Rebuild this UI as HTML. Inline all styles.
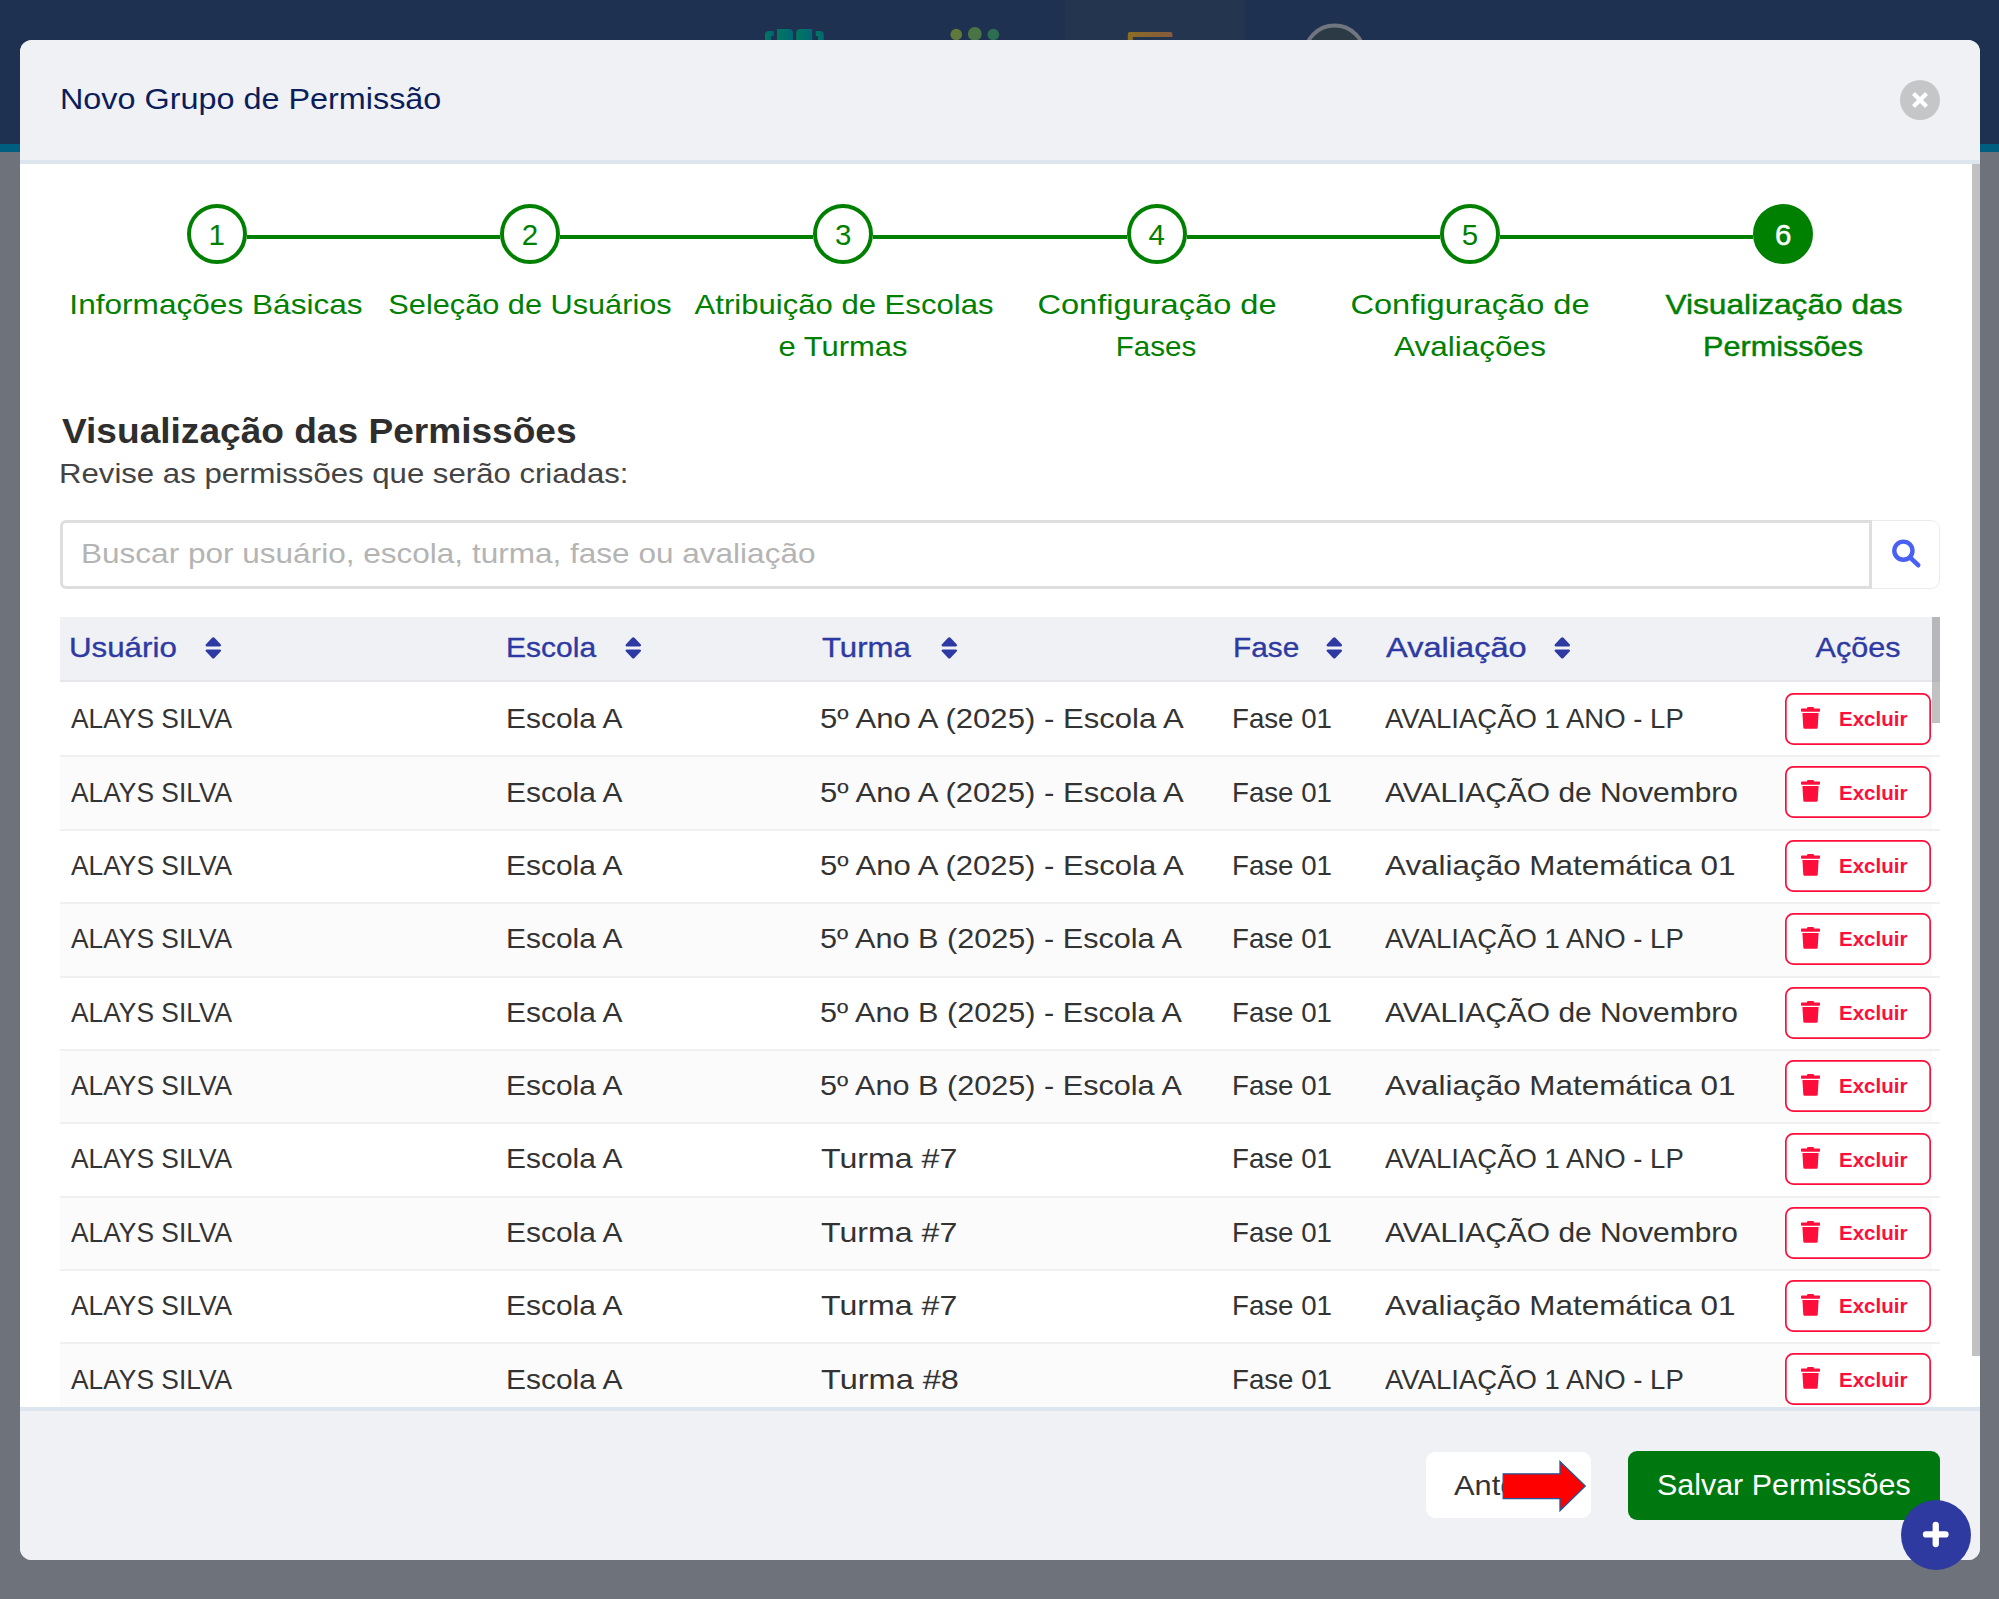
<!DOCTYPE html>
<html><head><meta charset="utf-8"><title>Novo Grupo de Permissão</title>
<style>
*{box-sizing:border-box;margin:0;padding:0}
html,body{width:1999px;height:1599px;overflow:hidden}
body{background:#6e727b;font-family:"Liberation Sans", sans-serif;position:relative}
.abs{position:absolute}
.t{position:absolute;white-space:nowrap;line-height:1;}
.t .c{display:inline-block;transform-origin:50% 0;}
#nav{position:absolute;left:0;top:0;width:1999px;height:144px;background:#1f3150}
#teal{position:absolute;left:0;top:144px;width:1999px;height:8px;background:#005f80}
#modal{position:absolute;left:20px;top:40px;width:1960px;height:1520px;border-radius:12px;overflow:hidden;background:#fff}
#mhead{position:absolute;left:20px;top:40px;width:1960px;height:120px;background:#f0f1f5;border-radius:12px 12px 0 0}
#mhb{position:absolute;left:20px;top:160px;width:1960px;height:4px;background:#dde6ef}
#mfoot{position:absolute;left:20px;top:1407px;width:1960px;height:153px;background:#f0f1f5;border-top:4px solid #dde6ef;border-radius:0 0 12px 12px}
#pscroll{position:absolute;left:1972px;top:164px;width:8px;height:1192px;background:#c1c1c1}
.step{position:absolute;top:204px;width:60px;height:60px;border-radius:50%;border:4px solid #008000;font-size:29.5px;line-height:54px;text-align:center}
.step span{display:inline-block}
.sline{position:absolute;top:235px;height:4px;background:#008000}
#search{position:absolute;left:60px;top:520px;width:1812px;height:69px;border:3px solid #dedede;border-radius:6px 0 0 6px;background:#fff}
#sbtn{position:absolute;left:1872px;top:520px;width:68px;height:69px;border:1px solid #ebebeb;border-left:none;border-radius:0 9px 9px 0;background:#fff}
#thead{position:absolute;left:60px;top:617px;width:1880px;height:63px;background:#f0f1f5}
#theadb{position:absolute;left:60px;top:680px;width:1880px;height:2px;background:#e6e7ea}
.row{position:absolute;left:60px;width:1872px;height:74px}
.rsep{position:absolute;left:60px;width:1880px;height:2px;background:#f0f0f0}
.exc{position:absolute;left:1785px}
.trash{position:absolute;left:1801px}
.sort{position:absolute;top:636.5px}
#tscroll1{position:absolute;left:1932px;top:617px;width:8px;height:65px;background:#b6b7ba}
#tscroll2{position:absolute;left:1932px;top:682px;width:8px;height:41px;background:#c1c1c1}
#btnant{position:absolute;left:1425.5px;top:1452px;width:165px;height:66px;background:#fff;border-radius:9px;overflow:hidden}
#btnsave{position:absolute;left:1628px;top:1451px;width:312px;height:69px;background:#007810;border-radius:9px}
#fab{position:absolute;left:1901px;top:1500px;width:70px;height:70px;border-radius:50%;background:#2e3a9f}
</style></head><body>
<div id="nav"></div>
<div class="abs" style="left:1065px;top:0;width:180px;height:40px;background:#243550"></div>
<div id="teal"></div>
<svg class="abs" style="left:755px;top:20px" width="80" height="25" viewBox="0 0 80 25">
 <defs><linearGradient id="g1" x1="0" x2="1" y1="0" y2="0"><stop offset="0" stop-color="#00785e"/><stop offset="1" stop-color="#006578"/></linearGradient></defs>
 <path d="M10 25 V15 a4 4 0 0 1 4 -4 H18.8 V16 H16 V25 Z" fill="url(#g1)"/>
 <path d="M22 25 V9 H34 a4 4 0 0 1 4 4 V25 Z" fill="url(#g1)"/>
 <path d="M41.2 25 V13 a4 4 0 0 1 4 -4 H57.2 V25 Z" fill="url(#g1)"/>
 <path d="M60.8 11 H64.8 a4 4 0 0 1 4 4 V25 H63 V16 H60.8 Z" fill="url(#g1)"/>
</svg>
<svg class="abs" style="left:940px;top:20px" width="70" height="22" viewBox="0 0 70 22">
 <circle cx="16.25" cy="14.5" r="5.8" fill="#5f7a3a"/>
 <circle cx="34.8" cy="13.9" r="6.9" fill="#4a7446"/>
 <circle cx="53.3" cy="14.5" r="5.8" fill="#2d6e52"/>
</svg>
<svg class="abs" style="left:1126px;top:30px" width="50" height="12" viewBox="0 0 50 12">
 <defs><linearGradient id="g2" x1="0" x2="1"><stop offset="0" stop-color="#8a6d25"/><stop offset="1" stop-color="#875a3e"/></linearGradient></defs>
 <path d="M1.8 12 v-8 a2 2 0 0 1 2 -2 h40.6 a2 2 0 0 1 2 2 v3.1 h-39.5 v4.9z" fill="url(#g2)"/>
</svg>
<svg class="abs" style="left:1300px;top:20px" width="70" height="22" viewBox="0 0 70 22">
 <circle cx="34.6" cy="35.6" r="30" fill="#2b3a44" stroke="#70757f" stroke-width="4"/>
</svg>
<div id="modal"></div>
<div id="mhead"></div>
<div id="mhb"></div>
<svg class="abs" style="left:1900px;top:80px" width="40" height="40" viewBox="0 0 40 40">
 <circle cx="20" cy="20" r="20" fill="#c5c6c8"/>
 <path d="M13.5 13.5 L26.5 26.5 M26.5 13.5 L13.5 26.5" stroke="#fff" stroke-width="4.2" stroke-linecap="butt"/>
</svg>
<div id="pscroll"></div>
<div class='sline' style='left:246.67px;width:253.33px;'></div><div class='sline' style='left:560.00px;width:253.33px;'></div><div class='sline' style='left:873.33px;width:253.33px;'></div><div class='sline' style='left:1186.67px;width:253.33px;'></div><div class='sline' style='left:1500.00px;width:253.33px;'></div>
<div class='step' style='left:186.67px;background:#fff;color:#008000;'><span>1</span></div><div class='step' style='left:500.00px;background:#fff;color:#008000;'><span>2</span></div><div class='step' style='left:813.33px;background:#fff;color:#008000;'><span>3</span></div><div class='step' style='left:1126.67px;background:#fff;color:#008000;'><span>4</span></div><div class='step' style='left:1440.00px;background:#fff;color:#008000;'><span>5</span></div><div class='step' style='left:1753.33px;background:#008000;color:#fff;-webkit-text-stroke:0.5px #fff;'><span>6</span></div>
<div id="search"></div>
<div id="sbtn"></div>
<svg class="abs" style="left:1885px;top:535px" width="40" height="40" viewBox="0 0 40 40">
 <circle cx="18.4" cy="15.7" r="9.1" fill="none" stroke="#4a60f5" stroke-width="4.4"/>
 <path d="M25.5 22.8 L33.2 30.2" stroke="#4a60f5" stroke-width="4.6" stroke-linecap="round"/>
</svg>
<div id="thead"></div>
<div id="theadb"></div>
<div class='row' style='top:682.00px;background:#ffffff;'></div><svg class='exc' style='top:693.00px;' width='146' height='52' viewBox='0 0 146 52'><rect x='0.85' y='0.85' width='144.3' height='50.3' rx='7.5' fill='#fff' stroke='#ff0d3b' stroke-width='1.7'/></svg><svg class='trash' style='top:707.00px' width='19' height='22' viewBox='0 0 19 22'><rect x='6' y='0.1' width='7' height='2.4' rx='1.1' fill='#ff0d3b'/><rect x='0' y='1.6' width='19' height='3.2' rx='0.7' fill='#ff0d3b'/><path d='M1.4 6 H17.6 L16.7 20.5 a1.3 1.3 0 0 1 -1.3 1.2 H3.6 a1.3 1.3 0 0 1 -1.3 -1.2 Z' fill='#ff0d3b'/></svg><div class='row' style='top:755.38px;background:#fbfbfc;'></div><div class='rsep' style='top:755.38px;'></div><svg class='exc' style='top:766.38px;' width='146' height='52' viewBox='0 0 146 52'><rect x='0.85' y='0.85' width='144.3' height='50.3' rx='7.5' fill='#fff' stroke='#ff0d3b' stroke-width='1.7'/></svg><svg class='trash' style='top:780.38px' width='19' height='22' viewBox='0 0 19 22'><rect x='6' y='0.1' width='7' height='2.4' rx='1.1' fill='#ff0d3b'/><rect x='0' y='1.6' width='19' height='3.2' rx='0.7' fill='#ff0d3b'/><path d='M1.4 6 H17.6 L16.7 20.5 a1.3 1.3 0 0 1 -1.3 1.2 H3.6 a1.3 1.3 0 0 1 -1.3 -1.2 Z' fill='#ff0d3b'/></svg><div class='row' style='top:828.76px;background:#ffffff;'></div><div class='rsep' style='top:828.76px;'></div><svg class='exc' style='top:839.76px;' width='146' height='52' viewBox='0 0 146 52'><rect x='0.85' y='0.85' width='144.3' height='50.3' rx='7.5' fill='#fff' stroke='#ff0d3b' stroke-width='1.7'/></svg><svg class='trash' style='top:853.76px' width='19' height='22' viewBox='0 0 19 22'><rect x='6' y='0.1' width='7' height='2.4' rx='1.1' fill='#ff0d3b'/><rect x='0' y='1.6' width='19' height='3.2' rx='0.7' fill='#ff0d3b'/><path d='M1.4 6 H17.6 L16.7 20.5 a1.3 1.3 0 0 1 -1.3 1.2 H3.6 a1.3 1.3 0 0 1 -1.3 -1.2 Z' fill='#ff0d3b'/></svg><div class='row' style='top:902.14px;background:#fbfbfc;'></div><div class='rsep' style='top:902.14px;'></div><svg class='exc' style='top:913.14px;' width='146' height='52' viewBox='0 0 146 52'><rect x='0.85' y='0.85' width='144.3' height='50.3' rx='7.5' fill='#fff' stroke='#ff0d3b' stroke-width='1.7'/></svg><svg class='trash' style='top:927.14px' width='19' height='22' viewBox='0 0 19 22'><rect x='6' y='0.1' width='7' height='2.4' rx='1.1' fill='#ff0d3b'/><rect x='0' y='1.6' width='19' height='3.2' rx='0.7' fill='#ff0d3b'/><path d='M1.4 6 H17.6 L16.7 20.5 a1.3 1.3 0 0 1 -1.3 1.2 H3.6 a1.3 1.3 0 0 1 -1.3 -1.2 Z' fill='#ff0d3b'/></svg><div class='row' style='top:975.52px;background:#ffffff;'></div><div class='rsep' style='top:975.52px;'></div><svg class='exc' style='top:986.52px;' width='146' height='52' viewBox='0 0 146 52'><rect x='0.85' y='0.85' width='144.3' height='50.3' rx='7.5' fill='#fff' stroke='#ff0d3b' stroke-width='1.7'/></svg><svg class='trash' style='top:1000.52px' width='19' height='22' viewBox='0 0 19 22'><rect x='6' y='0.1' width='7' height='2.4' rx='1.1' fill='#ff0d3b'/><rect x='0' y='1.6' width='19' height='3.2' rx='0.7' fill='#ff0d3b'/><path d='M1.4 6 H17.6 L16.7 20.5 a1.3 1.3 0 0 1 -1.3 1.2 H3.6 a1.3 1.3 0 0 1 -1.3 -1.2 Z' fill='#ff0d3b'/></svg><div class='row' style='top:1048.90px;background:#fbfbfc;'></div><div class='rsep' style='top:1048.90px;'></div><svg class='exc' style='top:1059.90px;' width='146' height='52' viewBox='0 0 146 52'><rect x='0.85' y='0.85' width='144.3' height='50.3' rx='7.5' fill='#fff' stroke='#ff0d3b' stroke-width='1.7'/></svg><svg class='trash' style='top:1073.90px' width='19' height='22' viewBox='0 0 19 22'><rect x='6' y='0.1' width='7' height='2.4' rx='1.1' fill='#ff0d3b'/><rect x='0' y='1.6' width='19' height='3.2' rx='0.7' fill='#ff0d3b'/><path d='M1.4 6 H17.6 L16.7 20.5 a1.3 1.3 0 0 1 -1.3 1.2 H3.6 a1.3 1.3 0 0 1 -1.3 -1.2 Z' fill='#ff0d3b'/></svg><div class='row' style='top:1122.28px;background:#ffffff;'></div><div class='rsep' style='top:1122.28px;'></div><svg class='exc' style='top:1133.28px;' width='146' height='52' viewBox='0 0 146 52'><rect x='0.85' y='0.85' width='144.3' height='50.3' rx='7.5' fill='#fff' stroke='#ff0d3b' stroke-width='1.7'/></svg><svg class='trash' style='top:1147.28px' width='19' height='22' viewBox='0 0 19 22'><rect x='6' y='0.1' width='7' height='2.4' rx='1.1' fill='#ff0d3b'/><rect x='0' y='1.6' width='19' height='3.2' rx='0.7' fill='#ff0d3b'/><path d='M1.4 6 H17.6 L16.7 20.5 a1.3 1.3 0 0 1 -1.3 1.2 H3.6 a1.3 1.3 0 0 1 -1.3 -1.2 Z' fill='#ff0d3b'/></svg><div class='row' style='top:1195.66px;background:#fbfbfc;'></div><div class='rsep' style='top:1195.66px;'></div><svg class='exc' style='top:1206.66px;' width='146' height='52' viewBox='0 0 146 52'><rect x='0.85' y='0.85' width='144.3' height='50.3' rx='7.5' fill='#fff' stroke='#ff0d3b' stroke-width='1.7'/></svg><svg class='trash' style='top:1220.66px' width='19' height='22' viewBox='0 0 19 22'><rect x='6' y='0.1' width='7' height='2.4' rx='1.1' fill='#ff0d3b'/><rect x='0' y='1.6' width='19' height='3.2' rx='0.7' fill='#ff0d3b'/><path d='M1.4 6 H17.6 L16.7 20.5 a1.3 1.3 0 0 1 -1.3 1.2 H3.6 a1.3 1.3 0 0 1 -1.3 -1.2 Z' fill='#ff0d3b'/></svg><div class='row' style='top:1269.04px;background:#ffffff;'></div><div class='rsep' style='top:1269.04px;'></div><svg class='exc' style='top:1280.04px;' width='146' height='52' viewBox='0 0 146 52'><rect x='0.85' y='0.85' width='144.3' height='50.3' rx='7.5' fill='#fff' stroke='#ff0d3b' stroke-width='1.7'/></svg><svg class='trash' style='top:1294.04px' width='19' height='22' viewBox='0 0 19 22'><rect x='6' y='0.1' width='7' height='2.4' rx='1.1' fill='#ff0d3b'/><rect x='0' y='1.6' width='19' height='3.2' rx='0.7' fill='#ff0d3b'/><path d='M1.4 6 H17.6 L16.7 20.5 a1.3 1.3 0 0 1 -1.3 1.2 H3.6 a1.3 1.3 0 0 1 -1.3 -1.2 Z' fill='#ff0d3b'/></svg><div class='row' style='top:1342.42px;background:#fbfbfc;'></div><div class='rsep' style='top:1342.42px;'></div><svg class='exc' style='top:1353.42px;' width='146' height='52' viewBox='0 0 146 52'><rect x='0.85' y='0.85' width='144.3' height='50.3' rx='7.5' fill='#fff' stroke='#ff0d3b' stroke-width='1.7'/></svg><svg class='trash' style='top:1367.42px' width='19' height='22' viewBox='0 0 19 22'><rect x='6' y='0.1' width='7' height='2.4' rx='1.1' fill='#ff0d3b'/><rect x='0' y='1.6' width='19' height='3.2' rx='0.7' fill='#ff0d3b'/><path d='M1.4 6 H17.6 L16.7 20.5 a1.3 1.3 0 0 1 -1.3 1.2 H3.6 a1.3 1.3 0 0 1 -1.3 -1.2 Z' fill='#ff0d3b'/></svg>
<svg class='sort' style='left:204.8px' width='17' height='22' viewBox='0 0 17 22'><path d='M7.1 0.8 a1.7 1.7 0 0 1 2.4 0 l6.1 6.5 a1.2 1.2 0 0 1 -0.85 2.1 h-12.9 a1.2 1.2 0 0 1 -0.85 -2.1 z M1.85 12.4 h12.9 a1.2 1.2 0 0 1 0.85 2.1 l-6.1 6.5 a1.7 1.7 0 0 1 -2.4 0 l-6.1 -6.5 a1.2 1.2 0 0 1 0.85 -2.1 z' fill='#2e3aa3'/></svg><svg class='sort' style='left:625.0px' width='17' height='22' viewBox='0 0 17 22'><path d='M7.1 0.8 a1.7 1.7 0 0 1 2.4 0 l6.1 6.5 a1.2 1.2 0 0 1 -0.85 2.1 h-12.9 a1.2 1.2 0 0 1 -0.85 -2.1 z M1.85 12.4 h12.9 a1.2 1.2 0 0 1 0.85 2.1 l-6.1 6.5 a1.7 1.7 0 0 1 -2.4 0 l-6.1 -6.5 a1.2 1.2 0 0 1 0.85 -2.1 z' fill='#2e3aa3'/></svg><svg class='sort' style='left:940.6px' width='17' height='22' viewBox='0 0 17 22'><path d='M7.1 0.8 a1.7 1.7 0 0 1 2.4 0 l6.1 6.5 a1.2 1.2 0 0 1 -0.85 2.1 h-12.9 a1.2 1.2 0 0 1 -0.85 -2.1 z M1.85 12.4 h12.9 a1.2 1.2 0 0 1 0.85 2.1 l-6.1 6.5 a1.7 1.7 0 0 1 -2.4 0 l-6.1 -6.5 a1.2 1.2 0 0 1 0.85 -2.1 z' fill='#2e3aa3'/></svg><svg class='sort' style='left:1325.6px' width='17' height='22' viewBox='0 0 17 22'><path d='M7.1 0.8 a1.7 1.7 0 0 1 2.4 0 l6.1 6.5 a1.2 1.2 0 0 1 -0.85 2.1 h-12.9 a1.2 1.2 0 0 1 -0.85 -2.1 z M1.85 12.4 h12.9 a1.2 1.2 0 0 1 0.85 2.1 l-6.1 6.5 a1.7 1.7 0 0 1 -2.4 0 l-6.1 -6.5 a1.2 1.2 0 0 1 0.85 -2.1 z' fill='#2e3aa3'/></svg><svg class='sort' style='left:1553.5px' width='17' height='22' viewBox='0 0 17 22'><path d='M7.1 0.8 a1.7 1.7 0 0 1 2.4 0 l6.1 6.5 a1.2 1.2 0 0 1 -0.85 2.1 h-12.9 a1.2 1.2 0 0 1 -0.85 -2.1 z M1.85 12.4 h12.9 a1.2 1.2 0 0 1 0.85 2.1 l-6.1 6.5 a1.7 1.7 0 0 1 -2.4 0 l-6.1 -6.5 a1.2 1.2 0 0 1 0.85 -2.1 z' fill='#2e3aa3'/></svg>
<div id="tscroll1"></div>
<div id="tscroll2"></div>
<div id="mfoot"></div>
<div id="btnant"></div>
<div id="btnsave"></div>
<div class='t' id='t0' style='left:60.04px;top:84.5px;transform:scaleX(1.1159);transform-origin:0 0;font-size:29px;font-weight:400;color:#0b1d5a;'><span class='c'>Novo Grupo de Permissão</span></div>
<div class='t' id='t1' style='left:215.67px;top:290.9px;width:0;font-size:28px;font-weight:400;color:#008000;'><span class='c' style='transform:translateX(-50%) scaleX(1.1284);'>Informações Básicas</span></div>
<div class='t' id='t2' style='left:529.50px;top:290.9px;width:0;font-size:28px;font-weight:400;color:#008000;'><span class='c' style='transform:translateX(-50%) scaleX(1.0965);'>Seleção de Usuários</span></div>
<div class='t' id='t3' style='left:843.83px;top:290.9px;width:0;font-size:28px;font-weight:400;color:#008000;'><span class='c' style='transform:translateX(-50%) scaleX(1.1104);'>Atribuição de Escolas</span></div>
<div class='t' id='t4' style='left:843.33px;top:332.9px;width:0;font-size:28px;font-weight:400;color:#008000;'><span class='c' style='transform:translateX(-50%) scaleX(1.1063);'>e Turmas</span></div>
<div class='t' id='t5' style='left:1157.16px;top:290.9px;width:0;font-size:28px;font-weight:400;color:#008000;'><span class='c' style='transform:translateX(-50%) scaleX(1.1637);'>Configuração de</span></div>
<div class='t' id='t6' style='left:1156.16px;top:332.9px;width:0;font-size:28px;font-weight:400;color:#008000;'><span class='c' style='transform:translateX(-50%) scaleX(1.0542);'>Fases</span></div>
<div class='t' id='t7' style='left:1470.49px;top:290.9px;width:0;font-size:28px;font-weight:400;color:#008000;'><span class='c' style='transform:translateX(-50%) scaleX(1.1637);'>Configuração de</span></div>
<div class='t' id='t8' style='left:1470.49px;top:332.9px;width:0;font-size:28px;font-weight:400;color:#008000;'><span class='c' style='transform:translateX(-50%) scaleX(1.1252);'>Avaliações</span></div>
<div class='t' id='t9' style='left:1783.82px;top:290.9px;width:0;font-size:28px;font-weight:400;color:#008000;-webkit-text-stroke:0.45px #008000;'><span class='c' style='transform:translateX(-50%) scaleX(1.1314);'>Visualização das</span></div>
<div class='t' id='t10' style='left:1782.82px;top:332.9px;width:0;font-size:28px;font-weight:400;color:#008000;-webkit-text-stroke:0.45px #008000;'><span class='c' style='transform:translateX(-50%) scaleX(1.0931);'>Permissões</span></div>
<div class='t' id='t11' style='left:61.53px;top:413.2px;transform:scaleX(1.0594);transform-origin:0 0;font-size:35px;font-weight:700;color:#2e2e2e;'><span class='c'>Visualização das Permissões</span></div>
<div class='t' id='t12' style='left:58.78px;top:459.7px;transform:scaleX(1.1122);transform-origin:0 0;font-size:28px;font-weight:400;color:#444;'><span class='c'>Revise as permissões que serão criadas:</span></div>
<div class='t' id='t13' style='left:81.17px;top:540.3px;transform:scaleX(1.1263);transform-origin:0 0;font-size:28px;font-weight:400;color:#b4b4b4;'><span class='c'>Buscar por usuário, escola, turma, fase ou avaliação</span></div>
<div class='t' id='t14' style='left:68.77px;top:633.9px;transform:scaleX(1.1170);transform-origin:0 0;font-size:28px;font-weight:400;color:#2e3aa3;-webkit-text-stroke:0.35px #2e3aa3;'><span class='c'>Usuário</span></div>
<div class='t' id='t15' style='left:506.38px;top:633.9px;transform:scaleX(1.0724);transform-origin:0 0;font-size:28px;font-weight:400;color:#2e3aa3;-webkit-text-stroke:0.35px #2e3aa3;'><span class='c'>Escola</span></div>
<div class='t' id='t16' style='left:822.00px;top:633.9px;transform:scaleX(1.1111);transform-origin:0 0;font-size:28px;font-weight:400;color:#2e3aa3;-webkit-text-stroke:0.35px #2e3aa3;'><span class='c'>Turma</span></div>
<div class='t' id='t17' style='left:1232.82px;top:633.9px;transform:scaleX(1.0635);transform-origin:0 0;font-size:28px;font-weight:400;color:#2e3aa3;-webkit-text-stroke:0.35px #2e3aa3;'><span class='c'>Fase</span></div>
<div class='t' id='t18' style='left:1386.00px;top:633.9px;transform:scaleX(1.1634);transform-origin:0 0;font-size:28px;font-weight:400;color:#2e3aa3;-webkit-text-stroke:0.35px #2e3aa3;'><span class='c'>Avaliação</span></div>
<div class='t' id='t19' style='left:1857.50px;top:633.9px;width:0;font-size:28px;font-weight:400;color:#2e3aa3;-webkit-text-stroke:0.35px #2e3aa3;'><span class='c' style='transform:translateX(-50%) scaleX(1.0897);'>Ações</span></div>
<div class='t' id='t20' style='left:71.00px;top:705.1px;transform:scaleX(0.9415);transform-origin:0 0;font-size:28px;font-weight:400;color:#333333;'><span class='c'>ALAYS SILVA</span></div>
<div class='t' id='t21' style='left:506.15px;top:705.1px;transform:scaleX(1.0692);transform-origin:0 0;font-size:28px;font-weight:400;color:#333333;'><span class='c'>Escola A</span></div>
<div class='t' id='t22' style='left:820.44px;top:705.1px;transform:scaleX(1.1101);transform-origin:0 0;font-size:28px;font-weight:400;color:#333333;'><span class='c'>5º Ano A (2025) - Escola A</span></div>
<div class='t' id='t23' style='left:1385.19px;top:705.1px;transform:scaleX(0.9829);transform-origin:0 0;font-size:28px;font-weight:400;color:#333333;'><span class='c'>AVALIAÇÃO 1 ANO - LP</span></div>
<div class='t' id='t24' style='left:1232.43px;top:705.1px;transform:scaleX(0.9880);transform-origin:0 0;font-size:28px;font-weight:400;color:#333333;'><span class='c'>Fase 01</span></div>
<div class='t' id='t25' style='left:1839.32px;top:708.2px;transform:scaleX(0.9769);transform-origin:0 0;font-size:21px;font-weight:700;color:#ff0d3b;'><span class='c'>Excluir</span></div>
<div class='t' id='t26' style='left:71.00px;top:778.5px;transform:scaleX(0.9415);transform-origin:0 0;font-size:28px;font-weight:400;color:#333333;'><span class='c'>ALAYS SILVA</span></div>
<div class='t' id='t27' style='left:506.15px;top:778.5px;transform:scaleX(1.0692);transform-origin:0 0;font-size:28px;font-weight:400;color:#333333;'><span class='c'>Escola A</span></div>
<div class='t' id='t28' style='left:820.44px;top:778.5px;transform:scaleX(1.1101);transform-origin:0 0;font-size:28px;font-weight:400;color:#333333;'><span class='c'>5º Ano A (2025) - Escola A</span></div>
<div class='t' id='t29' style='left:1385.24px;top:778.5px;transform:scaleX(1.0679);transform-origin:0 0;font-size:28px;font-weight:400;color:#333333;'><span class='c'>AVALIAÇÃO de Novembro</span></div>
<div class='t' id='t30' style='left:1232.43px;top:778.5px;transform:scaleX(0.9880);transform-origin:0 0;font-size:28px;font-weight:400;color:#333333;'><span class='c'>Fase 01</span></div>
<div class='t' id='t31' style='left:1839.32px;top:781.6px;transform:scaleX(0.9769);transform-origin:0 0;font-size:21px;font-weight:700;color:#ff0d3b;'><span class='c'>Excluir</span></div>
<div class='t' id='t32' style='left:71.00px;top:851.9px;transform:scaleX(0.9415);transform-origin:0 0;font-size:28px;font-weight:400;color:#333333;'><span class='c'>ALAYS SILVA</span></div>
<div class='t' id='t33' style='left:506.15px;top:851.9px;transform:scaleX(1.0692);transform-origin:0 0;font-size:28px;font-weight:400;color:#333333;'><span class='c'>Escola A</span></div>
<div class='t' id='t34' style='left:820.44px;top:851.9px;transform:scaleX(1.1101);transform-origin:0 0;font-size:28px;font-weight:400;color:#333333;'><span class='c'>5º Ano A (2025) - Escola A</span></div>
<div class='t' id='t35' style='left:1385.27px;top:851.9px;transform:scaleX(1.1218);transform-origin:0 0;font-size:28px;font-weight:400;color:#333333;'><span class='c'>Avaliação Matemática 01</span></div>
<div class='t' id='t36' style='left:1232.43px;top:851.9px;transform:scaleX(0.9880);transform-origin:0 0;font-size:28px;font-weight:400;color:#333333;'><span class='c'>Fase 01</span></div>
<div class='t' id='t37' style='left:1839.32px;top:855.0px;transform:scaleX(0.9769);transform-origin:0 0;font-size:21px;font-weight:700;color:#ff0d3b;'><span class='c'>Excluir</span></div>
<div class='t' id='t38' style='left:71.00px;top:925.2px;transform:scaleX(0.9415);transform-origin:0 0;font-size:28px;font-weight:400;color:#333333;'><span class='c'>ALAYS SILVA</span></div>
<div class='t' id='t39' style='left:506.15px;top:925.2px;transform:scaleX(1.0692);transform-origin:0 0;font-size:28px;font-weight:400;color:#333333;'><span class='c'>Escola A</span></div>
<div class='t' id='t40' style='left:820.45px;top:925.2px;transform:scaleX(1.0937);transform-origin:0 0;font-size:28px;font-weight:400;color:#333333;'><span class='c'>5º Ano B (2025) - Escola A</span></div>
<div class='t' id='t41' style='left:1385.19px;top:925.2px;transform:scaleX(0.9829);transform-origin:0 0;font-size:28px;font-weight:400;color:#333333;'><span class='c'>AVALIAÇÃO 1 ANO - LP</span></div>
<div class='t' id='t42' style='left:1232.43px;top:925.2px;transform:scaleX(0.9880);transform-origin:0 0;font-size:28px;font-weight:400;color:#333333;'><span class='c'>Fase 01</span></div>
<div class='t' id='t43' style='left:1839.32px;top:928.4px;transform:scaleX(0.9769);transform-origin:0 0;font-size:21px;font-weight:700;color:#ff0d3b;'><span class='c'>Excluir</span></div>
<div class='t' id='t44' style='left:71.00px;top:998.6px;transform:scaleX(0.9415);transform-origin:0 0;font-size:28px;font-weight:400;color:#333333;'><span class='c'>ALAYS SILVA</span></div>
<div class='t' id='t45' style='left:506.15px;top:998.6px;transform:scaleX(1.0692);transform-origin:0 0;font-size:28px;font-weight:400;color:#333333;'><span class='c'>Escola A</span></div>
<div class='t' id='t46' style='left:820.45px;top:998.6px;transform:scaleX(1.0937);transform-origin:0 0;font-size:28px;font-weight:400;color:#333333;'><span class='c'>5º Ano B (2025) - Escola A</span></div>
<div class='t' id='t47' style='left:1385.24px;top:998.6px;transform:scaleX(1.0679);transform-origin:0 0;font-size:28px;font-weight:400;color:#333333;'><span class='c'>AVALIAÇÃO de Novembro</span></div>
<div class='t' id='t48' style='left:1232.43px;top:998.6px;transform:scaleX(0.9880);transform-origin:0 0;font-size:28px;font-weight:400;color:#333333;'><span class='c'>Fase 01</span></div>
<div class='t' id='t49' style='left:1839.32px;top:1001.7px;transform:scaleX(0.9769);transform-origin:0 0;font-size:21px;font-weight:700;color:#ff0d3b;'><span class='c'>Excluir</span></div>
<div class='t' id='t50' style='left:71.00px;top:1072.0px;transform:scaleX(0.9415);transform-origin:0 0;font-size:28px;font-weight:400;color:#333333;'><span class='c'>ALAYS SILVA</span></div>
<div class='t' id='t51' style='left:506.15px;top:1072.0px;transform:scaleX(1.0692);transform-origin:0 0;font-size:28px;font-weight:400;color:#333333;'><span class='c'>Escola A</span></div>
<div class='t' id='t52' style='left:820.45px;top:1072.0px;transform:scaleX(1.0937);transform-origin:0 0;font-size:28px;font-weight:400;color:#333333;'><span class='c'>5º Ano B (2025) - Escola A</span></div>
<div class='t' id='t53' style='left:1385.27px;top:1072.0px;transform:scaleX(1.1218);transform-origin:0 0;font-size:28px;font-weight:400;color:#333333;'><span class='c'>Avaliação Matemática 01</span></div>
<div class='t' id='t54' style='left:1232.43px;top:1072.0px;transform:scaleX(0.9880);transform-origin:0 0;font-size:28px;font-weight:400;color:#333333;'><span class='c'>Fase 01</span></div>
<div class='t' id='t55' style='left:1839.32px;top:1075.1px;transform:scaleX(0.9769);transform-origin:0 0;font-size:21px;font-weight:700;color:#ff0d3b;'><span class='c'>Excluir</span></div>
<div class='t' id='t56' style='left:71.00px;top:1145.4px;transform:scaleX(0.9415);transform-origin:0 0;font-size:28px;font-weight:400;color:#333333;'><span class='c'>ALAYS SILVA</span></div>
<div class='t' id='t57' style='left:506.15px;top:1145.4px;transform:scaleX(1.0692);transform-origin:0 0;font-size:28px;font-weight:400;color:#333333;'><span class='c'>Escola A</span></div>
<div class='t' id='t58' style='left:821.42px;top:1145.4px;transform:scaleX(1.1472);transform-origin:0 0;font-size:28px;font-weight:400;color:#333333;'><span class='c'>Turma #7</span></div>
<div class='t' id='t59' style='left:1385.19px;top:1145.4px;transform:scaleX(0.9829);transform-origin:0 0;font-size:28px;font-weight:400;color:#333333;'><span class='c'>AVALIAÇÃO 1 ANO - LP</span></div>
<div class='t' id='t60' style='left:1232.43px;top:1145.4px;transform:scaleX(0.9880);transform-origin:0 0;font-size:28px;font-weight:400;color:#333333;'><span class='c'>Fase 01</span></div>
<div class='t' id='t61' style='left:1839.32px;top:1148.5px;transform:scaleX(0.9769);transform-origin:0 0;font-size:21px;font-weight:700;color:#ff0d3b;'><span class='c'>Excluir</span></div>
<div class='t' id='t62' style='left:71.00px;top:1218.8px;transform:scaleX(0.9415);transform-origin:0 0;font-size:28px;font-weight:400;color:#333333;'><span class='c'>ALAYS SILVA</span></div>
<div class='t' id='t63' style='left:506.15px;top:1218.8px;transform:scaleX(1.0692);transform-origin:0 0;font-size:28px;font-weight:400;color:#333333;'><span class='c'>Escola A</span></div>
<div class='t' id='t64' style='left:821.42px;top:1218.8px;transform:scaleX(1.1472);transform-origin:0 0;font-size:28px;font-weight:400;color:#333333;'><span class='c'>Turma #7</span></div>
<div class='t' id='t65' style='left:1385.24px;top:1218.8px;transform:scaleX(1.0679);transform-origin:0 0;font-size:28px;font-weight:400;color:#333333;'><span class='c'>AVALIAÇÃO de Novembro</span></div>
<div class='t' id='t66' style='left:1232.43px;top:1218.8px;transform:scaleX(0.9880);transform-origin:0 0;font-size:28px;font-weight:400;color:#333333;'><span class='c'>Fase 01</span></div>
<div class='t' id='t67' style='left:1839.32px;top:1221.9px;transform:scaleX(0.9769);transform-origin:0 0;font-size:21px;font-weight:700;color:#ff0d3b;'><span class='c'>Excluir</span></div>
<div class='t' id='t68' style='left:71.00px;top:1292.1px;transform:scaleX(0.9415);transform-origin:0 0;font-size:28px;font-weight:400;color:#333333;'><span class='c'>ALAYS SILVA</span></div>
<div class='t' id='t69' style='left:506.15px;top:1292.1px;transform:scaleX(1.0692);transform-origin:0 0;font-size:28px;font-weight:400;color:#333333;'><span class='c'>Escola A</span></div>
<div class='t' id='t70' style='left:821.42px;top:1292.1px;transform:scaleX(1.1472);transform-origin:0 0;font-size:28px;font-weight:400;color:#333333;'><span class='c'>Turma #7</span></div>
<div class='t' id='t71' style='left:1385.27px;top:1292.1px;transform:scaleX(1.1218);transform-origin:0 0;font-size:28px;font-weight:400;color:#333333;'><span class='c'>Avaliação Matemática 01</span></div>
<div class='t' id='t72' style='left:1232.43px;top:1292.1px;transform:scaleX(0.9880);transform-origin:0 0;font-size:28px;font-weight:400;color:#333333;'><span class='c'>Fase 01</span></div>
<div class='t' id='t73' style='left:1839.32px;top:1295.3px;transform:scaleX(0.9769);transform-origin:0 0;font-size:21px;font-weight:700;color:#ff0d3b;'><span class='c'>Excluir</span></div>
<div class='t' id='t74' style='left:71.00px;top:1365.5px;transform:scaleX(0.9415);transform-origin:0 0;font-size:28px;font-weight:400;color:#333333;'><span class='c'>ALAYS SILVA</span></div>
<div class='t' id='t75' style='left:506.15px;top:1365.5px;transform:scaleX(1.0692);transform-origin:0 0;font-size:28px;font-weight:400;color:#333333;'><span class='c'>Escola A</span></div>
<div class='t' id='t76' style='left:821.42px;top:1365.5px;transform:scaleX(1.1611);transform-origin:0 0;font-size:28px;font-weight:400;color:#333333;'><span class='c'>Turma #8</span></div>
<div class='t' id='t77' style='left:1385.19px;top:1365.5px;transform:scaleX(0.9829);transform-origin:0 0;font-size:28px;font-weight:400;color:#333333;'><span class='c'>AVALIAÇÃO 1 ANO - LP</span></div>
<div class='t' id='t78' style='left:1232.43px;top:1365.5px;transform:scaleX(0.9880);transform-origin:0 0;font-size:28px;font-weight:400;color:#333333;'><span class='c'>Fase 01</span></div>
<div class='t' id='t79' style='left:1839.32px;top:1368.6px;transform:scaleX(0.9769);transform-origin:0 0;font-size:21px;font-weight:700;color:#ff0d3b;'><span class='c'>Excluir</span></div>
<div class='t' id='t80' style='left:1656.84px;top:1470.9px;transform:scaleX(1.0492);transform-origin:0 0;font-size:29px;font-weight:400;color:#ffffff;'><span class='c'>Salvar Permissões</span></div>
<div class='t' id='t81' style='left:1453.80px;top:1472.3px;transform:scaleX(1.1000);transform-origin:0 0;font-size:28px;font-weight:400;color:#333;'><span class='c'>Anterior</span></div>
<svg class="abs" style="left:1500px;top:1458px" width="90" height="56" viewBox="0 0 90 56">
 <path d="M3.2 15.8 H60 V3.6 L85.3 28 L60 52.8 V40.6 H3.2z" fill="#ff0000" stroke="#1f5a9c" stroke-width="1.3"/>
</svg>
<div id="fab"></div>
<svg class="abs" style="left:1901px;top:1500px" width="70" height="70" viewBox="0 0 70 70">
 <path d="M34.75 24.8 V44 M25 34.4 H44.5" stroke="#fff" stroke-width="6.3" stroke-linecap="round"/>
</svg>
</body></html>
